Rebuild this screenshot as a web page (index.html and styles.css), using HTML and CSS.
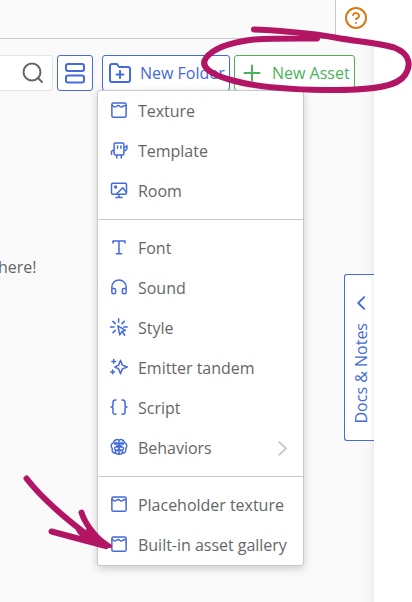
FILE: index.html
```html
<!DOCTYPE html>
<html lang="en">
<head>
<meta charset="utf-8">
<title>Assets</title>
<link rel="stylesheet" href="styles.css">
</head>
<body>
<svg class="defs" aria-hidden="true">
  <symbol id="texture" viewBox="0 0 24 24"><rect x="2.500" y="2.500" width="19" height="19" rx="2"/><path d="M3 6c1.500 0 1.500 2 3.500 2S9 6 11 6s2 2 4 2S17 6 21 6"/></symbol>
</svg>
<div class="app">
  <header class="top"><div class="tabs"></div><div class="help">
    <svg class="icon" viewBox="0 0 24 24"><circle cx="12" cy="12" r="10"/><path d="M9.100 9a3 3 0 0 1 5.800 1c0 2-3 3-3 3M12 17h.01"/></svg>
  </div></header>
  <main class="panel">
    <div class="toolbar">
      <div class="search"><svg class="icon" viewBox="0 0 24 24"><circle cx="11" cy="11" r="8.500"/><path d="m21 21-4-4"/></svg></div>
      <button class="btn view"><svg class="icon" viewBox="0 0 24 24"><rect x="3" y="3" width="18" height="7" rx="2"/><rect x="3" y="14.500" width="18" height="7" rx="2"/></svg></button>
      <button class="btn folder"><svg class="icon" viewBox="0 0 24 24"><path d="M22 19a2 2 0 0 1-2 2H4a2 2 0 0 1-2-2V5a2 2 0 0 1 2-2h5l2 3h9a2 2 0 0 1 2 2zM12 10v7M8.500 13.500h7"/></svg><span>New Folder</span></button>
      <button class="btn asset"><svg class="icon" viewBox="0 0 24 24"><path d="M12 4.500v15M4.500 12h15"/></svg><span>New Asset</span></button>
    </div>
    <p class="empty">here!</p>
  </main>
  <div class="docs"><svg class="icon" viewBox="0 0 24 24"><path d="m15.500 18.500-6.500-6.500 6.500-6.500"/></svg><span>Docs &amp; Notes</span></div>
  <nav class="menu">
    <a class="item"><svg class="icon"><use href="#texture"/></svg>Texture</a>
    <a class="item"><svg class="icon" viewBox="0 0 24 24"><path d="M7 2.500h10a1.500 1.500 0 0 1 1.500 1.500v13a1.500 1.500 0 0 1-1.500 1.500H7A1.500 1.500 0 0 1 5.500 17V4A1.500 1.500 0 0 1 7 2.500zM10 6.500v3M14.500 6.500v3M9 19v3.500M15 19v3.500M5 12.500H3.500L2 14v3.500M19 12.500h2l1.500-2V6M20 8h2"/></svg>Template</a>
    <a class="item"><svg class="icon" viewBox="0 0 24 24"><rect x="2" y="3" width="20" height="14.500" rx="2"/><circle cx="7.500" cy="8" r="1.300"/><path d="m9 17 8-8 5 6M12 18v4M8 22h8"/></svg>Room</a>
    <hr>
    <a class="item"><svg class="icon" viewBox="0 0 24 24"><path d="M4 6.500V4h16v2.500M12 4v17M8.500 21h7"/></svg>Font</a>
    <a class="item"><svg class="icon" viewBox="0 0 24 24"><path d="M2.500 18v-6a9.500 9.500 0 0 1 19 0v6M21.500 19a2 2 0 0 1-2 2h-1a2 2 0 0 1-2-2v-3a2 2 0 0 1 2-2h3zM2.500 19a2 2 0 0 0 2 2h1a2 2 0 0 0 2-2v-3a2 2 0 0 0-2-2h-3z"/></svg>Sound</a>
    <a class="item"><svg class="icon" viewBox="0 0 24 24"><path d="m10.500 10.500 10 6-4.500 1.500-3 4.500zM16.500 18l3 5M11.500 1v4.500M4 4.500l3 3M19 4.500l-3 3M.5 12h5M18 12h5M4 19.500l3-3"/></svg>Style</a>
    <a class="item"><svg class="icon" viewBox="0 0 24 24"><path d="m14 3 2.500 6.500L23 12l-6.500 2.500L14 21l-2.500-6.500L6.500 12l5-2.500zM5 2v5M2.500 4.500h5M3.500 16v5M1 18.500h5"/></svg>Emitter tandem</a>
    <a class="item"><svg class="icon" viewBox="0 0 24 24"><path d="M8 2.500H7a3 3 0 0 0-3 3v4C4 11 3 12 1.500 12 3 12 4 13 4 14.500v4a3 3 0 0 0 3 3h1M16 2.500h1a3 3 0 0 1 3 3v4c0 1.500 1 2.500 2.500 2.500-1.500 0-2.500 1-2.500 2.500v4a3 3 0 0 1-3 3h-1"/></svg>Script</a>
    <a class="item"><svg class="icon" viewBox="0 0 24 24"><path d="M12 3C9 1 5 3 5 6c-4 1-4 6-2 8-1 4 2 7 5 6 1 2 4 2 4 0 0 2 3 2 4 0 4 1 6-3 5-6 2-2 2-7-2-8 0-3-4-5-7-3zM12 4v16M6 8c2-3 5-2 5 1s-5 2-5 5 4 3 5 1M18 8c-2-3-5-2-5 1s5 2 5 5-4 3-5 1M8 20c-2-2 0-4 2-3M16 20c2-2 0-4-2-3M8 6v3M16 6v3M8 12h8"/></svg>Behaviors<svg class="icon more" viewBox="0 0 24 24"><path d="m7 4 9 8.500-9 8.500"/></svg></a>
    <hr>
    <a class="item"><svg class="icon"><use href="#texture"/></svg>Placeholder texture</a>
    <a class="item"><svg class="icon"><use href="#texture"/></svg>Built-in asset gallery</a>
  </nav>
  <svg class="ink" viewBox="0 0 412 602">
    <path d="M254 29.500C287 31 310 33 335 37.500S377 42.500 394 47.500C411 54 411 66 405 75C398 86 376 90 336 90C298 90 259 88 231 80C209 74 200 66 206 58C214 47 233 42 254 39.500C278 38 300 38.500 317 38.500"/>
    <path d="M26.500 478.500C44 501 70 522 90 537L106 546M51.500 531.500L106 546M81.500 512.500C85 524 93 534 106 546"/>
    <path class="tip" d="M78 530 109 545.500 86 541zM88 530 110 546 98 545z"/>
  </svg>
</div>
</body>
</html>
```
FILE: styles.css
```css
* { box-sizing: border-box; }
body { margin: 0; background: #fff; color: #666; font: 16px/24px "Open Sans", "Noto Sans", sans-serif; }
.defs { display: none; }
.app { position: relative; width: 412px; height: 602px; overflow: hidden; display: flex; flex-direction: column; }
.icon { width: 18px; height: 18px; flex: none; fill: none; stroke: #446adb; stroke-width: 2; stroke-linecap: round; stroke-linejoin: round; }
.top { display: flex; height: 39px; flex: none; }
.tabs { width: 336px; background: #fafafa; border: solid #c5c9ce; border-width: 0 1px 1px 0; }
.help { padding: 6px 0 0 8px; }
.help .icon { display: block; width: 24px; height: 24px; stroke: #d87b16; }
.panel { width: 374px; flex: 1; padding-top: 16px; background: linear-gradient(to left, #ececec, #f7f7f7 5px, #fafafa 14px); }
.toolbar { display: flex; }
.search { width: 53px; height: 36px; padding: 5px 7px 0 0; display: flex; justify-content: flex-end; background: #fff; border: 1px solid #e2e4e6; border-left: 0; border-radius: 0 3px 3px 0; }
.toolbar .icon { width: 24px; height: 24px; }
.search .icon { stroke: #666; }
.btn { display: flex; align-items: center; gap: 8px; height: 36px; margin: 0; padding: 0 5px; border: 1px solid #446adb; border-radius: 3px; background: #fff; color: #446adb; font: inherit; white-space: nowrap; }
.view { width: 36px; margin-left: 4px; }
.folder { width: 128px; margin-left: 9px; }
.asset { width: 121px; margin-left: 4px; border-color: #4ab35a; color: #4ab35a; }
.asset .icon { stroke: #4ab35a; }
.empty { margin: 164px 0 0 -2px; }
.docs { position: absolute; left: 344px; top: 274px; width: 30px; height: 167px; padding: 17px 0 0 3px; display: flex; flex-direction: column; align-items: center; gap: 9px; border: 1px solid #446adb; border-right: 0; border-radius: 3px 0 0 3px; background: linear-gradient(to left, #f0f0f0, #fff 4px); color: #446adb; }
.docs .icon { width: 22px; height: 22px; }
.docs span { writing-mode: vertical-rl; transform: rotate(180deg); line-height: 24px; white-space: nowrap; }
.menu { position: absolute; left: 97px; top: 90px; width: 207px; background: #fff; border: 1px solid #c5c9ce; border-radius: 3px; box-shadow: 0 3px 8px rgba(0, 0, 0, .18); }
.item { display: flex; align-items: center; height: 40px; padding: 0 11px 0 12px; gap: 10px; letter-spacing: -.02px; }
.item .icon { margin-bottom: 2px; }
.item .more { margin: 0 0 0 auto; stroke: #c5c9ce; stroke-width: 2.5; }
hr { height: 1px; margin: 8px 0; border: 0; background: #c5c9ce; }
.ink { position: absolute; inset: 0; width: 412px; height: 602px; fill: none; stroke: #b31565; stroke-width: 6; stroke-linecap: round; stroke-linejoin: round; pointer-events: none; }
.ink .tip { fill: #b31565; stroke-width: 4; }
```
